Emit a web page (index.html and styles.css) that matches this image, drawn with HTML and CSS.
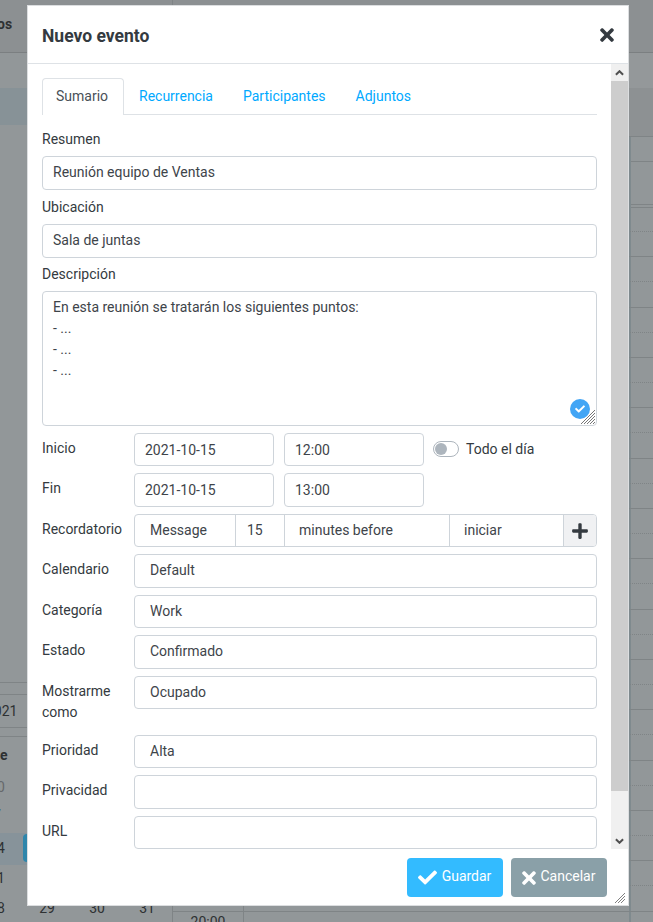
FILE: index.html
```html
<!DOCTYPE html>
<html lang="es">
<head>
<meta charset="utf-8">
<title>Nuevo evento</title>
<link rel="stylesheet" href="styles.css">
</head>
<body>
<div class="page">
  <aside class="side">
    <div class="side-top"><b>os</b></div>
    <div class="side-gap"></div>
    <div class="side-band"></div>
    <div class="side-fill"></div>
    <div class="mini-strip"></div>
    <div class="mini-year">2021</div>
    <div class="mini-strip2"></div>
    <div class="mini-row mini-head"><b>e</b></div>
    <div class="mini-row mini-dim"><span>30</span></div>
    <div class="mini-row mini-blue"><span>7</span></div>
    <div class="mini-row mini-today"><span>14</span><i class="mini-chip"></i></div>
    <div class="mini-row mini-short"><span>21</span></div>
    <div class="mini-row mini-last"><span>28</span><span>29</span><span>30</span><span>31</span></div>
  </aside>
  <main class="main">
    <div class="main-top"></div>
    <div class="main-band"></div>
    <div class="main-head"></div>
    <div class="main-allday"></div>
    <div class="slot"><i></i><i></i><i></i></div>
    <div class="slot"><i></i><i></i><i></i></div>
    <div class="slot"><i></i><i></i><i></i></div>
    <div class="slot"><i></i><i></i><i></i></div>
    <div class="slot"><i></i><i></i><i></i></div>
    <div class="slot"><i></i><i></i><i></i></div>
    <div class="slot"><i></i><i></i><i></i></div>
    <div class="slot"><i></i><i></i><i></i></div>
    <div class="slot"><i></i><i></i><i></i></div>
    <div class="slot"><i></i><i></i><i></i></div>
    <div class="slot"><i></i><i></i><i></i></div>
    <div class="slot"><i></i><i></i><i></i></div>
    <div class="slot"><i></i><i></i><i></i></div>
    <div class="slot"><i></i><i></i><i></i></div>
    <div class="slot"><i>20:00</i><i></i><i></i></div>
  </main>

  <section class="dialog">
    <header class="dialog-head">
      <h1 class="dialog-title">Nuevo evento</h1>
      <svg class="icon-close" viewBox="0 0 352 512"><path d="M242.72 256l100.07-100.07c12.28-12.28 12.28-32.19 0-44.48l-22.24-22.24c-12.28-12.28-32.19-12.28-44.48 0L176 189.28 75.93 89.21c-12.28-12.28-32.19-12.28-44.48 0L9.21 111.45c-12.28 12.28-12.28 32.19 0 44.48L109.28 256 9.21 356.07c-12.28 12.28-12.28 32.19 0 44.48l22.24 22.24c12.28 12.28 32.2 12.28 44.48 0L176 322.72l100.07 100.07c12.28 12.28 32.2 12.28 44.48 0l22.24-22.24c12.28-12.28 12.28-32.19 0-44.48L242.72 256z"/></svg>
    </header>
    <div class="dialog-body">
      <form class="form">
        <nav class="tabs">
          <span class="tab tab-active">Sumario</span>
          <span class="tab">Recurrencia</span>
          <span class="tab">Participantes</span>
          <span class="tab">Adjuntos</span>
        </nav>
        <div class="group group-first">
          <label class="label">Resumen</label>
          <input class="control" type="text" value="Reunión equipo de Ventas">
        </div>
        <div class="group group-second">
          <label class="label">Ubicación</label>
          <input class="control" type="text" value="Sala de juntas">
        </div>
        <div class="group">
          <label class="label">Descripción</label>
          <div class="area-wrap">
            <textarea class="control area">En esta reunión se tratarán los siguientes puntos:
- ...
- ...
- ...</textarea>
            <span class="area-badge"><svg viewBox="0 0 512 512"><path d="M173.898 439.404l-166.4-166.4c-9.997-9.997-9.997-26.206 0-36.204l36.203-36.204c9.997-9.998 26.207-9.998 36.204 0L192 312.69 432.095 72.596c9.997-9.997 26.207-9.997 36.204 0l36.203 36.204c9.997 9.997 9.997 26.206 0 36.204l-294.4 294.401c-9.998 9.997-26.207 9.997-36.204-.001z"/></svg></span>
            <svg class="area-grip" viewBox="0 0 14 14"><path d="M14 0L0 14M14 3L3 14M14 6L6 14M14 9L9 14M14 12L12 14"/></svg>
          </div>
        </div>
        <div class="row">
          <label class="row-label">Inicio</label>
          <input class="control date" type="text" value="2021-10-15">
          <input class="control date" type="text" value="12:00">
          <span class="toggle"><i></i></span>
          <span class="toggle-text">Todo el día</span>
        </div>
        <div class="row">
          <label class="row-label">Fin</label>
          <input class="control date" type="text" value="2021-10-15">
          <input class="control date" type="text" value="13:00">
        </div>
        <div class="row">
          <label class="row-label">Recordatorio</label>
          <div class="combo">
            <span class="combo-cell cell-type">Message</span>
            <span class="combo-cell cell-num">15</span>
            <span class="combo-cell cell-unit">minutes before</span>
            <span class="combo-cell cell-rel">iniciar</span>
            <span class="combo-add"><svg viewBox="0 0 448 512"><path d="M416 208H272V64c0-17.67-14.33-32-32-32h-32c-17.67 0-32 14.33-32 32v144H32c-17.67 0-32 14.33-32 32v32c0 17.67 14.33 32 32 32h144v144c0 17.67 14.33 32 32 32h32c17.67 0 32-14.33 32-32V304h144c17.67 0 32-14.33 32-32v-32c0-17.67-14.33-32-32-32z"/></svg></span>
          </div>
        </div>
        <div class="row"><label class="row-label">Calendario</label><div class="select">Default</div></div>
        <div class="row"><label class="row-label">Categoría</label><div class="select">Work</div></div>
        <div class="row"><label class="row-label">Estado</label><div class="select">Confirmado</div></div>
        <div class="row row-tall"><label class="row-label">Mostrarme como</label><div class="select">Ocupado</div></div>
        <div class="row"><label class="row-label">Prioridad</label><div class="select">Alta</div></div>
        <div class="row"><label class="row-label">Privacidad</label><div class="select"></div></div>
        <div class="row"><label class="row-label">URL</label><input class="control" type="text"></div>
      </form>
      <div class="scrollbar">
        <span class="sb-btn"><svg viewBox="0 0 10 6"><path d="M1 5l4-4 4 4" /></svg></span>
        <span class="sb-thumb"></span>
        <span class="sb-rest"></span>
        <span class="sb-btn"><svg viewBox="0 0 10 6"><path d="M1 1l4 4 4-4" /></svg></span>
      </div>
    </div>
    <footer class="dialog-foot">
      <button class="btn btn-save" type="button"><svg class="btn-check" viewBox="0 0 512 512"><path d="M173.898 439.404l-166.4-166.4c-9.997-9.997-9.997-26.206 0-36.204l36.203-36.204c9.997-9.998 26.207-9.998 36.204 0L192 312.69 432.095 72.596c9.997-9.997 26.207-9.997 36.204 0l36.203 36.204c9.997 9.997 9.997 26.206 0 36.204l-294.4 294.401c-9.998 9.997-26.207 9.997-36.204-.001z"/></svg>Guardar</button>
      <button class="btn btn-cancel" type="button"><svg class="btn-times" viewBox="0 0 352 512"><path d="M242.72 256l100.07-100.07c12.28-12.28 12.28-32.19 0-44.48l-22.24-22.24c-12.28-12.28-32.19-12.28-44.48 0L176 189.28 75.93 89.21c-12.28-12.28-32.19-12.28-44.48 0L9.21 111.45c-12.28 12.28-12.28 32.19 0 44.48L109.28 256 9.21 356.07c-12.28 12.28-12.28 32.19 0 44.48l22.24 22.24c12.28 12.28 32.2 12.28 44.48 0L176 322.72l100.07 100.07c12.28 12.28 32.2 12.28 44.48 0l22.24-22.24c12.28-12.28 12.28-32.19 0-44.48L242.72 256z"/></svg>Cancelar</button>
      <svg class="grip" viewBox="0 0 10 10"><path d="M10 0L0 10M10 3L3 10M10 6L6 10"/></svg>
    </footer>
  </section>
</div>
</body>
</html>
```

FILE: styles.css
```css
* { box-sizing: border-box; }
html, body { margin: 0; padding: 0; }
body {
  font-family: Roboto, "Liberation Sans", sans-serif;
  font-size: 14px;
  line-height: 21px;
  color: #343a40;
  overflow: hidden;
}
.page {
  position: relative;
  width: 653px;
  height: 922px;
  overflow: hidden;
  display: flex;
  background: #929799;
  color: #2e3133;
}

/* dimmed page behind the dialog */
.side {
  width: 173px;
  height: 922px;
  flex: none;
  display: flex;
  flex-direction: column;
  border-right: 1px solid #7f8486;
}
.side-top {
  height: 53px;
  flex: none;
  background: #8c9092;
  border-bottom: 1px solid #7b7f81;
  padding-top: 14px;
  margin-left: -3px;
}
.side-gap { height: 35px; flex: none; background: #929799; }
.side-band { height: 37px; flex: none; background: #879297; }
.side-fill { flex: 1; }
.mini-strip {
  height: 13px;
  flex: none;
  border-top: 1px solid #7f8486;
  border-bottom: 1px solid #7f8486;
}
.mini-year {
  height: 32px;
  flex: none;
  margin-left: -14px;
  line-height: 32px;
}
.mini-strip2 {
  height: 10px;
  flex: none;
  border-top: 1px solid #7f8486;
  border-bottom: 1px solid #7f8486;
}
.mini-row {
  height: 30px;
  flex: none;
  display: flex;
  position: relative;
  margin-left: -28px;
  line-height: 30px;
}
.mini-row span {
  width: 50px;
  flex: none;
  text-align: center;
}
.mini-row b { margin-left: 28px; }
.mini-head { height: 35px; line-height: 36px; }
.mini-dim { color: #66696b; height: 31px; line-height: 31px; }
.mini-blue { color: #2a4a66; height: 30px; line-height: 24px; }
.mini-today { background: #87939a; height: 32px; line-height: 30px; margin-left: 0; }
.mini-today span { margin-left: -28px; }
.mini-short { height: 28px; line-height: 26px; }
.mini-last { height: 29px; line-height: 30px; }
.mini-chip {
  position: absolute;
  left: 23px;
  top: 1px;
  width: 10px;
  height: 28px;
  border-radius: 4px;
  background: #2f86ab;
}
.main {
  flex: 1;
  min-width: 0;
  display: flex;
  flex-direction: column;
}
.main-top { height: 53px; flex: none; background: #8c9092; border-bottom: 1px solid #7b7f81; }
.main-band { height: 35px; flex: none; background: #94989a; }
.main-head { height: 49px; flex: none; background: #8d9193; border-bottom: 1px solid #7f8486; }
.main-allday {
  height: 71px;
  flex: none;
  margin-bottom: -1px;
  background:
    linear-gradient(90deg, transparent 456px, #7f8a8e 456px, #7f8a8e 458px, transparent 458px),
    linear-gradient(transparent 24px, #7f8486 24px, #7f8486 25px, transparent 25px),
    linear-gradient(transparent 67px, #7f8486 67px, #7f8486 68px, transparent 68px),
    linear-gradient(transparent 70px, #7f8486 70px);
}
.slot {
  height: 50.33px;
  flex: none;
  display: grid;
  grid-template-columns: 71px 387px 1fr;
  position: relative;
  border-bottom: 1px solid #7f8486;
}
.slot::after {
  content: "";
  position: absolute;
  left: 0;
  right: 0;
  top: 24px;
  border-top: 1px dotted #7f8486;
}
.slot i {
  font-style: normal;
  border-right: 1px solid #7f8486;
  text-align: center;
}
.slot i:nth-child(2) { border-right: 2px solid #7f8a8e; }
.slot i:last-child { border-right: 0; }

/* dialog */
.dialog {
  position: absolute;
  left: 27px;
  top: 5px;
  width: 602px;
  height: 901px;
  background: #fff;
  border: 1px solid #dcdee0;
  color: #343a40;
  display: flex;
  flex-direction: column;
}
.dialog-head {
  height: 58px;
  flex: none;
  display: flex;
  align-items: center;
  justify-content: space-between;
  padding: 1px 14px 0;
  border-bottom: 1px solid #dee2e6;
}
.dialog-title {
  margin: 2px 0 0;
  font-size: 17.5px;
  font-weight: 700;
  line-height: 26px;
  color: #343a40;
}
.icon-close { width: 14px; height: 20px; fill: #343a40; display: block; }
.dialog-body {
  height: 785px;
  flex: none;
  display: flex;
  overflow: hidden;
}
.form {
  flex: 1;
  min-width: 0;
  padding: 14px 14px 0;
  overflow: hidden;
}
.tabs {
  display: flex;
  height: 37px;
  border-bottom: 1px solid #dee2e6;
  margin-bottom: 13.5px;
}
.tab {
  height: 37px;
  padding: 8px 15px 0;
  color: #00a9ff;
  line-height: 21px;
}
.tab-active {
  width: 82px;
  padding: 7px 13px 0;
  color: #495057;
  background: #fff;
  border: 1px solid #dee2e6;
  border-bottom: 0;
  border-radius: 4px 4px 0 0;
}
.group { margin-bottom: 6.5px; }
.group-first { margin-bottom: 7px; }
.group-first .control, .group-second .control { padding-bottom: 1px; }
.group-second { margin-bottom: 6px; }
.label { display: block; line-height: 21px; margin-bottom: 6.5px; color: #343a40; }
.control {
  display: block;
  width: 100%;
  height: 33.5px;
  border: 1px solid #ced4da;
  border-radius: 4px;
  background: #fff;
  padding: 0 10px;
  font: 14px/21px Roboto, "Liberation Sans", sans-serif;
  color: #3e444a;
  outline: 0;
  margin: 0;
}
.area-wrap { position: relative; }
.area {
  height: 135.25px;
  padding: 5px 10px;
  resize: none;
  overflow: hidden;
}
.area-badge {
  position: absolute;
  right: 7px;
  bottom: 7px;
  width: 20px;
  height: 20px;
  border-radius: 50%;
  background: #42a5f5;
  display: flex;
  align-items: center;
  justify-content: center;
}
.area-badge svg { width: 10px; height: 10px; fill: #fff; }
.area-grip {
  position: absolute;
  right: 2px;
  bottom: 2px;
  width: 14px;
  height: 14px;
  fill: none;
  stroke: #777;
  stroke-width: 1;
}
.row {
  display: flex;
  align-items: flex-start;
  height: 33.5px;
  margin-bottom: 7px;
}
.row-tall { height: 52px; }
.row-label {
  width: 92px;
  flex: none;
  padding-top: 5px;
  padding-right: 10px;
  line-height: 21.5px;
}
.row .control { flex: 1; width: auto; min-width: 0; }
.row .date {
  flex: none;
  width: 140px;
  margin-right: 10px;
}
.toggle {
  width: 26px;
  height: 16px;
  flex: none;
  margin: 8px 7px 0 -1px;
  border: 1px solid #adb5bd;
  border-radius: 8px;
  padding: 1px;
  display: block;
}
.toggle i {
  display: block;
  width: 12px;
  height: 12px;
  border-radius: 50%;
  background: #adb5bd;
}
.toggle-text { margin-top: 6px; }
.combo, .select {
  flex: 1;
  min-width: 0;
  height: 33.5px;
  border: 1px solid #ced4da;
  border-radius: 4px;
  color: #3e444a;
}
.select { padding: 5px 15px; }
.combo { display: flex; overflow: hidden; }
.combo-cell {
  flex: none;
  height: 100%;
  padding: 5px 14px 0;
  border-right: 1px solid #ced4da;
}
.cell-type { width: 101px; padding-left: 15px; }
.cell-num { width: 49px; padding-left: 11px; padding-right: 0; }
.cell-unit { width: 165px; }
.cell-rel { width: 114px; }
.combo-add {
  flex: 1;
  background: #f0f1f3;
  display: flex;
  align-items: center;
  justify-content: center;
}
.combo-add svg { width: 16px; height: 18px; fill: #343a40; display: block; }
.scrollbar {
  width: 17px;
  flex: none;
  display: flex;
  flex-direction: column;
  background: #f0f0f0;
}
.sb-btn {
  height: 17px;
  flex: none;
  display: flex;
  align-items: center;
  justify-content: center;
}
.sb-btn svg { width: 9px; height: 6px; fill: none; stroke: #505050; stroke-width: 2.2; display: block; }
.sb-thumb { height: 710px; flex: none; background: #cdcdcd; }
.sb-rest { flex: 1; }
.dialog-foot {
  flex: 1;
  position: relative;
  display: flex;
  justify-content: flex-end;
  gap: 8px;
  padding: 9px 21px 0 0;
}
.btn {
  width: 96px;
  height: 39px;
  border: 0;
  border-radius: 4px;
  color: #fff;
  font: 14px/21px Roboto, "Liberation Sans", sans-serif;
  display: flex;
  align-items: center;
  justify-content: center;
  padding: 0 0 2px;
}
.btn-save { background: #33bbff; }
.btn-cancel { background: #8aa0a8; }
.btn svg { fill: #fff; display: block; flex: none; margin: 2px 5px 0 -1px; }
.btn-check { width: 19px; height: 19px; }
.btn-times { width: 14px; height: 20px; }
.grip {
  position: absolute;
  right: 3px;
  bottom: 2px;
  width: 10px;
  height: 10px;
  stroke: #808080;
  stroke-width: 1;
  fill: none;
}
```
